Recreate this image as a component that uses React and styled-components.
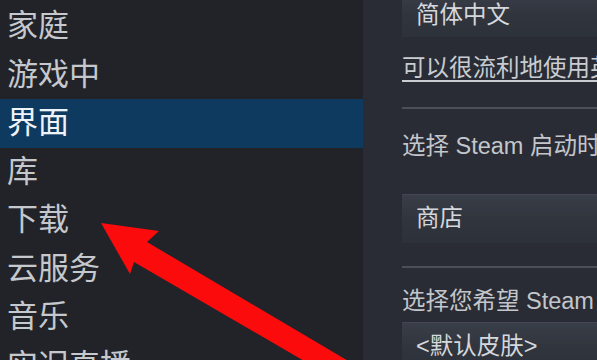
import React from 'react';
import styled, { createGlobalStyle } from 'styled-components';

const GlobalStyle = createGlobalStyle`
  html, body {
    margin: 0;
    padding: 0;
    width: 597px;
    height: 360px;
    overflow: hidden;
    background: #22242b;
  }
  body {
    font-family: "Liberation Sans", "Noto Sans CJK SC", sans-serif;
  }
`;

const menuItems = ['家庭', '游戏中', '界面', '库', '下载', '云服务', '音乐', '实况直播'];

const App = () => {
  return (
    <>
      <GlobalStyle />
      <Page>
        <Sidebar>
          {menuItems.map((item) => (
            <MenuItem key={item} $active={item === '界面'}>{item}</MenuItem>
          ))}
        </Sidebar>

        <Content>
          <Dropdown $first>简体中文</Dropdown>
          <HelpLink>可以很流利地使用英语之外的语言？帮助我们翻译 Steam</HelpLink>
          <Divider $gap={24} />
          <Label $gap={22}>选择 Steam 启动时的默认窗口</Label>
          <Dropdown $gap={33}>商店</Dropdown>
          <Divider $gap={23} />
          <Label $gap={18}>选择您希望 Steam 使用的皮肤</Label>
          <Dropdown $gap={6}>&lt;默认皮肤&gt;</Dropdown>
        </Content>

        {/* 标注箭头 */}
        <ArrowLayer viewBox="0 0 597 360" width="597" height="360">
          <polygon
            points="101,223 159,231 147,242 460,427 440,440 134,262 130,274"
            fill="#fb0b0b"
          />
        </ArrowLayer>
      </Page>
    </>
  );
};

const Page = styled.div`
  position: relative;
  display: flex;
  width: 597px;
  height: 360px;
  overflow: hidden;
`;

const Sidebar = styled.div`
  width: 363px;
  flex-shrink: 0;
  padding-top: 2px;
  background: #212329;
  display: flex;
  flex-direction: column;
`;

const MenuItem = styled.div`
  height: 48.5px;
  line-height: 48.5px;
  flex-shrink: 0;
  padding-left: 7px;
  font-size: 31px;
  color: ${(p) => (p.$active ? '#eef3f8' : '#c5c8cd')};
  background: ${(p) => (p.$active ? '#0e3a5f' : 'transparent')};
  white-space: nowrap;
`;

const Content = styled.div`
  flex: 1;
  min-width: 0;
  padding-left: 39px;
  background: #292c34;
  display: flex;
  flex-direction: column;
  font-size: 23.5px;
  color: #c6c9ce;
  white-space: nowrap;
`;

const Dropdown = styled.div`
  height: ${(p) => (p.$first ? '46px' : '49px')};
  flex-shrink: 0;
  margin-top: ${(p) => (p.$first ? '-9px' : `${p.$gap}px`)};
  margin-right: -40px;
  padding-left: 14px;
  line-height: ${(p) => (p.$first ? '48px' : '49px')};
  background: linear-gradient(180deg, #3a3e48 0%, #30343d 55%, #2d3139 100%);
  box-shadow: inset 0 1px 0 rgba(255, 255, 255, 0.05);
  color: #d4d7db;
`;

const HelpLink = styled.div`
  margin-top: 16px;
  line-height: 30px;
  text-decoration: underline;
  text-decoration-thickness: 2px;
  text-underline-offset: 4px;
  color: #c9ccd1;
`;

const Divider = styled.div`
  height: 2px;
  flex-shrink: 0;
  margin-top: ${(p) => p.$gap}px;
  margin-right: -40px;
  background: #4b4f58;
`;

const Label = styled.div`
  margin-top: ${(p) => p.$gap}px;
  line-height: 30px;
  color: #c3c6cb;
`;

const ArrowLayer = styled.svg`
  position: absolute;
  left: 0;
  top: 0;
  pointer-events: none;
`;

export default App;
